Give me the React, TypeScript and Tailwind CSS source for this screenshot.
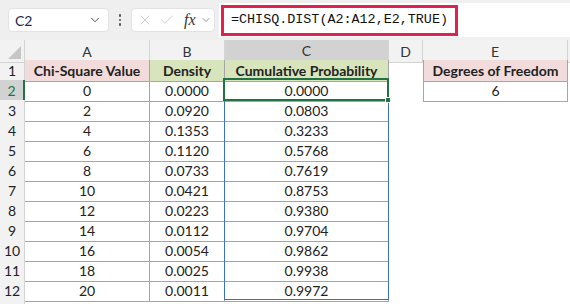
import { ChevronDown, X, Check } from 'lucide-react';

const rows = [
  ['0', '0.0000', '0.0000'],
  ['2', '0.0920', '0.0803'],
  ['4', '0.1353', '0.3233'],
  ['6', '0.1120', '0.5768'],
  ['8', '0.0733', '0.7619'],
  ['10', '0.0421', '0.8753'],
  ['12', '0.0223', '0.9380'],
  ['14', '0.0112', '0.9704'],
  ['16', '0.0054', '0.9862'],
  ['18', '0.0025', '0.9938'],
  ['20', '0.0011', '0.9972'],
];

const cols = 'grid grid-cols-[25px_125px_75px_164px_34px_145px_1fr]';

function ColHead({ label, active }: { label: string; active?: boolean }) {
  return (
    <div
      className={`flex items-center justify-center border-r border-[#d4d4d4] ${
        active ? 'bg-[#d2d2d2] border-b-2 border-b-[#217346]' : 'bg-[#f2f2f2] border-b border-b-[#d4d4d4]'
      }`}
    >
      {label}
    </div>
  );
}

export default function App() {
  return (
    <div className="w-[570px] h-[304px] overflow-hidden bg-white text-[14px] text-[#222]" style={{ fontFamily: 'Lato, "Open Sans", sans-serif' }}>
      {/* formula bar */}
      <div className="h-[40px] bg-[#efefef] flex items-center">
        <div className="ml-[8px] w-[101px] h-[24px] bg-white rounded-[4px] border border-[#e2e2e2] flex items-center px-[6px] justify-between">
          <span className="text-[14px] text-[#1a2a4a]">C2</span>
          <ChevronDown className="w-[14px] h-[14px] text-[#444]" strokeWidth={1.6} />
        </div>
        <div className="w-[22px] flex flex-col items-center gap-[2px]">
          <span className="w-[2.5px] h-[2.5px] bg-[#555] rounded-full" />
          <span className="w-[2.5px] h-[2.5px] bg-[#555] rounded-full" />
          <span className="w-[2.5px] h-[2.5px] bg-[#555] rounded-full" />
        </div>
        <div className="w-[84px] h-[24px] bg-white rounded-[4px] border border-[#e2e2e2] flex items-center pl-[5px] gap-[6px]">
          <X className="w-[16px] h-[16px] text-[#c8c8c8]" strokeWidth={1.4} />
          <Check className="w-[16px] h-[16px] text-[#c8c8c8]" strokeWidth={1.4} />
          <span className="italic text-[16px] text-[#333] ml-[3px]" style={{ fontFamily: '"Liberation Serif", serif' }}>fx</span>
          <ChevronDown className="w-[12px] h-[12px] text-[#777] -ml-[2px]" strokeWidth={1.6} />
        </div>
        <div className="ml-[4px] flex-1 self-stretch my-[3px] bg-white flex items-center">
          <div className="ml-[2px] h-[31px] w-[237px] border-[3px] border-[#e0224e] flex items-center pl-[7px]">
            <span className="text-[13.4px] text-[#111]" style={{ fontFamily: '"Liberation Mono", monospace' }}>
              =CHISQ.DIST(A2:A12,E2,TRUE)
            </span>
          </div>
        </div>
      </div>

      {/* sheet */}
      <div className="relative">
        <div className={`${cols} h-[20px] text-[#333]`}>
          <div className="bg-[#f2f2f2] border-r border-b border-[#d4d4d4] relative overflow-hidden">
            <div className="absolute right-[3px] bottom-[3px] w-0 h-0 border-l-[13px] border-l-transparent border-b-[13px] border-b-[#c6c6c6]" />
          </div>
          <ColHead label="A" />
          <ColHead label="B" />
          <ColHead label="C" active />
          <ColHead label="D" />
          <ColHead label="E" />
          <div className="bg-[#f2f2f2] border-b border-[#d4d4d4]" />
        </div>

        {/* header row */}
        <div className={`${cols} h-[20px] font-bold`}>
          <div className="bg-[#f2f2f2] border-r border-b border-[#d4d4d4] flex items-center justify-center font-normal">1</div>
          <div className="bg-[#f2dcdb] border-r border-b border-[#a6a6a6] flex items-center justify-center">Chi-Square Value</div>
          <div className="bg-[#d8e4bc] border-r border-b border-[#a6a6a6] flex items-center justify-center">Density</div>
          <div className="bg-[#d8e4bc] border-r border-b border-[#a6a6a6] flex items-center justify-center">Cumulative Probability</div>
          <div />
          <div className="bg-[#f2dcdb] border-l border-r border-b border-[#a6a6a6] flex items-center justify-center">Degrees of Freedom</div>
          <div />
        </div>

        {rows.map((r, i) => (
          <div key={i} className={`${cols} h-[20px]`}>
            <div
              className={`border-b border-[#d4d4d4] flex items-center justify-center ${
                i === 0 ? 'bg-[#d2d2d2] border-r-2 border-r-[#217346] text-[#217346]' : 'bg-[#f2f2f2] border-r'
              }`}
            >
              {i + 2}
            </div>
            <div className="border-r border-b border-[#a6a6a6] flex items-center justify-center">{r[0]}</div>
            <div className="border-r border-b border-[#a6a6a6] flex items-center justify-center">{r[1]}</div>
            <div className="border-r border-b border-[#a6a6a6] flex items-center justify-center">{r[2]}</div>
            <div />
            {i === 0 ? (
              <div className="border-l border-r border-b border-[#a6a6a6] flex items-center justify-center">6</div>
            ) : (
              <div />
            )}
            <div />
          </div>
        ))}

        <div className={`${cols} h-[24px]`}>
          <div className="bg-[#f2f2f2] border-r border-[#d4d4d4]" />
        </div>

        {/* reference range C2:C12 */}
        <div className="absolute left-[224px] top-[39px] w-[165px] h-[221px] border-[1.5px] border-[#3a6fd1] pointer-events-none" />
        {/* active cell C2 */}
        <div className="absolute left-[223px] top-[38px] w-[166px] h-[23px] border-2 border-[#217346] pointer-events-none" />
        <div className="absolute left-[385px] top-[57px] w-[6px] h-[6px] bg-[#217346] border border-white" />
      </div>
    </div>
  );
}
